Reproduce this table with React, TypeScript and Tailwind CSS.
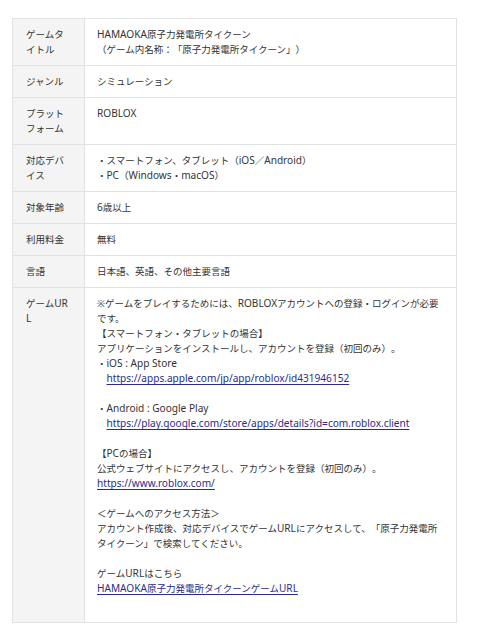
import React from "react";

const L = ({ children }: { children: React.ReactNode }) => (
  <span className="text-[10.1px] leading-[15px]">{children}</span>
);

const A = ({ children }: { children: React.ReactNode }) => (
  <a href="#" className="text-[#2b2b8c] underline underline-offset-[1.5px]">
    {children}
  </a>
);

const rows: { label: React.ReactNode; key: string; content: React.ReactNode }[] = [
  {
    key: "title",
    label: "ゲームタイトル",
    content: (
      <>
        <L>HAMAOKA</L>原子力発電所タイクーン
        <br />
        （ゲーム内名称：「原子力発電所タイクーン」）
      </>
    ),
  },
  { key: "genre", label: "ジャンル", content: "シミュレーション" },
  { key: "platform", label: "プラットフォーム", content: <L>ROBLOX</L> },
  {
    key: "device",
    label: "対応デバイス",
    content: (
      <>
        ・スマートフォン、タブレット（<L>iOS</L>／<L>Android</L>）
        <br />
        ・<L>PC</L>（<L>Windows</L>・<L>macOS</L>）
      </>
    ),
  },
  { key: "age", label: "対象年齢", content: <><L>6</L>歳以上</> },
  { key: "fee", label: "利用料金", content: "無料" },
  { key: "lang", label: "言語", content: "日本語、英語、その他主要言語" },
  {
    key: "url",
    label: (
      <>
        ゲーム<L>URL</L>
      </>
    ),
    content: (
      <>
        ※ゲームをプレイするためには、<L>ROBLOX</L>アカウントへの登録・ログインが必要です。
        <br />
        【スマートフォン・タブレットの場合】
        <br />
        アプリケーションをインストールし、アカウントを登録（初回のみ）。
        <br />
        ・<L>iOS : App Store</L>
        <br />
        {"\u3000"}
        <A>
          <L>https://apps.apple.com/jp/app/roblox/id431946152</L>
        </A>
        <br />
        <br />
        ・<L>Android : Google Play</L>
        <br />
        {"\u3000"}
        <A>
          <L>https://play.google.com/store/apps/details?id=com.roblox.client</L>
        </A>
        <br />
        <br />
        【<L>PC</L>の場合】
        <br />
        公式ウェブサイトにアクセスし、アカウントを登録（初回のみ）。
        <br />
        <A>
          <L>https://www.roblox.com/</L>
        </A>
        <br />
        <br />
        ＜ゲームへのアクセス方法＞
        <br />
        アカウント作成後、対応デバイスでゲーム<L>URL</L>にアクセスして、「原子力発電所タイクーン」で検索してください。
        <br />
        <br />
        ゲーム<L>URL</L>はこちら
        <br />
        <A>
          <L>HAMAOKA</L>原子力発電所タイクーンゲーム<L>URL</L>
        </A>
        <br />
        <br />
      </>
    ),
  },
];

export default function App() {
  return (
    <div
      className="min-h-[640px] w-[479px] bg-white pt-[18px] pl-[12px] text-[9.5px] leading-[15px] text-[#333333] [text-spacing-trim:space-all]"
      style={{ fontFamily: '"Noto Sans", "Noto Sans CJK JP", sans-serif' }}
    >
      <table className="w-[445px] border-collapse border border-[#e2e2e2]">
        <tbody>
          {rows.map((r, i) => (
            <tr key={r.key} className="border-b border-[#e2e2e2]">
              <td className="w-[72px] border-r border-[#e2e2e2] bg-[#f4f4f4] pt-[8px] pb-[8px] pl-[13px] pr-[14px] align-top">
                <div className="w-[44px] break-all">{r.label}</div>
              </td>
              <td
                className={
                  i === rows.length - 1
                    ? "px-[12px] pt-[8px] pb-[11px] align-top break-all"
                    : "px-[12px] pt-[8px] pb-[8px] align-top break-all"
                }
              >
                {r.content}
              </td>
            </tr>
          ))}
        </tbody>
      </table>
    </div>
  );
}
